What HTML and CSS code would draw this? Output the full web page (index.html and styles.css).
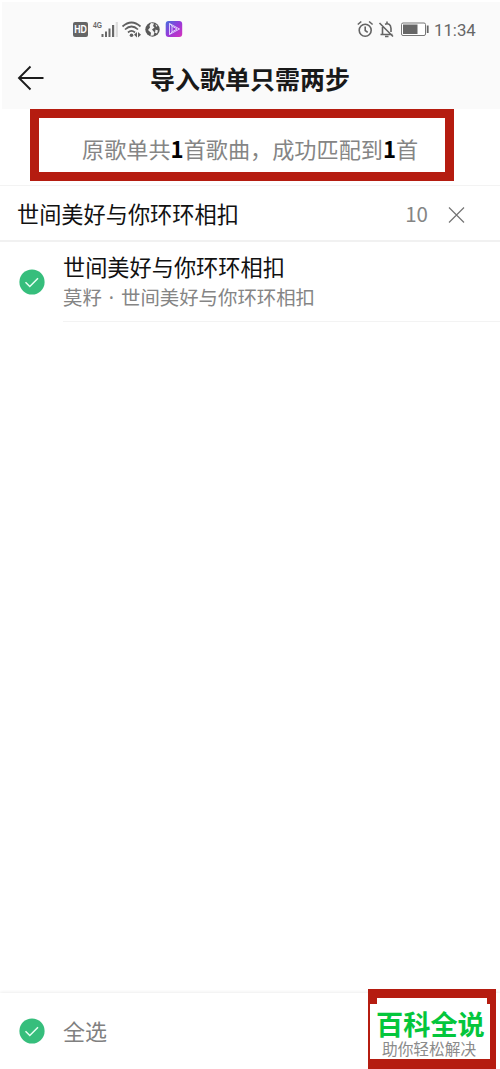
FILE: index.html
```html
<!DOCTYPE html>
<html lang="zh-CN">
<head>
<meta charset="utf-8">
<title>导入歌单只需两步</title>
<link rel="stylesheet" href="styles.css">
</head>
<body>
<div class="screen">
  <header class="top">
    <div class="status">
      <div class="status-left">
        <svg width="112" height="20" viewBox="0 0 112 20">
          <rect x="1" y="2" width="15" height="15" rx="2" fill="#656565"/>
          <text class="hd" x="2.2" y="13.2" textLength="12.6" lengthAdjust="spacingAndGlyphs">HD</text>
          <text class="net" x="21" y="8.3" textLength="9" lengthAdjust="spacingAndGlyphs">4G</text>
          <g fill="#686868">
            <rect x="29.5" y="14" width="2" height="3"/>
            <rect x="33" y="11.5" width="2" height="5.5"/>
            <rect x="36.5" y="8.5" width="2" height="8.5"/>
            <rect x="40" y="5" width="2.2" height="12"/>
            <rect x="43.7" y="2" width="2.2" height="15" fill="#dcdcdc"/>
          </g>
          <path d="M50.5 6.5Q59.5-1.5 68.5 6.5M53 9.5Q59.500 3.500 66 9.500M56 12.500Q59.500 9.300 63 12.500" fill="none" stroke="#606060" stroke-width="1.700"/>
          <circle cx="59.500" cy="15.300" r="1.800" fill="#606060"/>
          <path d="M62 14.800l3-2.800v5.600zM69 14.800l-3-2.800v5.600z" fill="#606060"/>
          <circle cx="80.500" cy="9.500" r="7.200" fill="#585858"/>
          <path d="M79 3l3 .5-1 2.500 1.500 1.500-2.500 2 2.500 3-1 3-3 .3.500-3-3-2.800 2-2.500-.5-2zM83.500 4l2 2-1.500.8zM83.500 9.500l2.500 1-1 3-2-.8z" fill="#f4f4f4"/>
          <defs><linearGradient id="app" x1="0" y1="0" x2="1" y2="1"><stop offset="0" stop-color="#456fdc"/><stop offset=".5" stop-color="#9639da"/><stop offset="1" stop-color="#d733ba"/></linearGradient></defs>
          <rect x="93.700" y="1" width="16.500" height="16" rx="3" fill="url(#app)"/>
          <path d="M97.500 3.500v11l10-5.500zM100 6v6l5-3zM97.500 3.500l2.500 2.500M97.500 14.500l2.500-2.500" fill="none" stroke="#e6dcff" stroke-width=".9" stroke-linejoin="round"/>
        </svg>
      </div>
      <div class="status-right">
        <svg width="72" height="20" viewBox="0 0 72 20">
          <g fill="none" stroke="#646464" stroke-width="1.600">
            <circle cx="8.200" cy="10.200" r="6"/>
            <path d="M8.200 6.500v4l2.500 1.800M.8 4.500l3.500-3M15.600 4.500l-3.500-3"/>
            <path d="M23.500 14.500h12M25.500 14V7M28 4.200Q33.500 2.500 34 8.500V12M30 1.500v2.500M22.500 3l13.500 13.500M28 16.500h3.500"/>
          </g>
          <rect x="44.500" y="3" width="24" height="12.500" rx="1.500" fill="#fff" stroke="#777"/>
          <rect x="46" y="4.500" width="14.500" height="9.500" fill="#666"/>
          <rect x="69.800" y="5.500" width="1.800" height="7.500" fill="#666"/>
        </svg>
        <span class="clock">11:34</span>
      </div>
    </div>
    <div class="nav">
      <svg class="back" width="28" height="26" viewBox="0 0 28 26" fill="none" stroke="#1c1c1c" stroke-width="1.900"><path d="M26.500 13H2M13.500 1.500L2 13l11.500 11.500"/></svg>
      <h1 class="nav-title">导入歌单只需两步</h1>
    </div>
  </header>
  <div class="summary"><p class="summary-box">原歌单共<b>1</b>首歌曲，成功匹配到<b>1</b>首</p></div>
  <div class="playlist">
    <span class="name">世间美好与你环环相扣</span>
    <span class="count">10</span>
    <svg class="close" width="18" height="18" viewBox="0 0 18 18" stroke="#747474" stroke-width="1.200"><path d="M1 1.500l15 15M16 1.500l-15 15"/></svg>
  </div>
  <main class="songs">
    <div class="song">
      <svg class="check" width="26" height="26" viewBox="0 0 26 26"><circle cx="13" cy="13" r="12.600" fill="#36be7c"/><path d="M6.500 13.300l4.300 4.200 8.200-8.300" fill="none" stroke="#e8fff3" stroke-width="1.500"/></svg>
      <div class="song-info">
        <div class="song-name">世间美好与你环环相扣</div>
        <div class="song-meta">莫籽<span class="dot"> · </span>世间美好与你环环相扣</div>
      </div>
    </div>
  </main>
  <footer class="bottom">
    <svg class="check" width="26" height="26" viewBox="0 0 26 26"><circle cx="13" cy="13" r="12.600" fill="#36be7c"/><path d="M6.500 13.300l4.300 4.200 8.200-8.300" fill="none" stroke="#e8fff3" stroke-width="1.500"/></svg>
    <span class="all">全选</span>
  </footer>
  <div class="stamp">
    <div class="stamp-notch"></div>
    <div class="stamp-card">
      <div class="stamp-name">百科全说</div>
      <div class="stamp-tag">助你轻松解决</div>
    </div>
  </div>
</div>
</body>
</html>
```
FILE: styles.css
```css
* { box-sizing: border-box; }
body {
  margin: 0;
  background: #fff;
  font-family: "Noto Sans CJK SC", sans-serif;
}
svg { display: block; flex: none; }
.screen {
  position: relative;
  display: flex;
  flex-direction: column;
  width: 500px;
  height: 1069px;
  overflow: hidden;
}
.top {
  height: 107px;
  margin: 2px 0 0 2px;
  background: #fafafa;
}
.status {
  display: flex;
  justify-content: space-between;
  height: 47px;
  padding: 18px 24px 0 70px;
}
.status-right { display: flex; }
.clock {
  width: 42px;
  margin-left: 5px;
  font: 16.8px/20px Roboto, sans-serif;
  color: #666;
  white-space: nowrap;
}
.hd { font: bold 10px "Liberation Sans", sans-serif; fill: #fff; }
.net { font: bold 9px "Liberation Sans", sans-serif; fill: #666; }
.nav {
  display: flex;
  align-items: center;
  height: 60px;
  padding: 0 0 2px 15px;
}
.nav-title {
  margin: 0 0 0 105px;
  font-size: 25px;
  line-height: 36px;
  font-weight: 700;
  color: #191919;
}
.summary {
  height: 77px;
  padding-left: 30px;
  border-bottom: 1px solid #f3f3f3;
}
.summary-box {
  width: 424px;
  height: 72px;
  margin: 0;
  padding-left: 43px;
  border: 9px solid #b51c10;
  font-size: 22.15px;
  line-height: 60px;
  color: #858585;
  white-space: nowrap;
}
.summary-box b { color: #000; }
.playlist {
  display: flex;
  align-items: center;
  height: 56px;
  padding: 0 34px 0 17px;
  border-bottom: 2px solid #f1f1f1;
  line-height: 54px;
}
.name, .song-name { font-size: 22.2px; color: #111; }
.count { margin-left: auto; font-size: 20.5px; color: #858585; }
.close { margin: 4px 0 0 20px; }
.song {
  display: flex;
  height: 80px;
  padding-left: 19px;
}
.song .check { margin-top: 27px; }
.song-info {
  flex: 1;
  margin-left: 18px;
  padding-top: 8px;
  border-bottom: 1px solid #f3f3f3;
}
.song-name { line-height: 32px; }
.song-meta { font-size: 19.4px; line-height: 29px; color: #858585; }
.dot { font-family: "Noto Sans", sans-serif; line-height: 1; padding: 0 2px; }
.bottom {
  display: flex;
  align-items: center;
  height: 76px;
  margin-top: auto;
  padding-left: 19px;
  background: #fff;
  box-shadow: 0 -1px 3px #eee;
}
.all { margin: -2px 0 0 18px; font-size: 22px; line-height: 32px; color: #808080; }
.stamp {
  position: absolute;
  left: 368px;
  top: 989px;
  width: 128px;
  height: 80px;
  padding: 9px 6px 0 2px;
  background: #b51c10;
}
.stamp-notch { height: 6px; margin: 0 3px 0 7px; background: #fff; }
.stamp-card {
  height: 55px;
  background: #fff;
  white-space: nowrap;
}
.stamp-name {
  padding-left: 6px;
  font-size: 27.2px;
  line-height: 38px;
  font-weight: 700;
  color: #04c63c;
}
.stamp-tag {
  padding-left: 12px;
  font-size: 15.7px;
  line-height: 14px;
  color: #8b8b8b;
}
```
